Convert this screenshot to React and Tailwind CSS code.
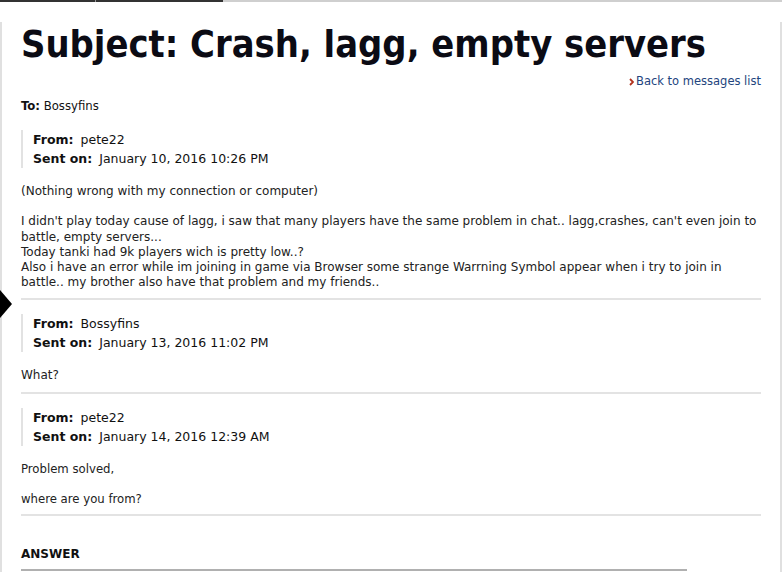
import React from 'react';

const messages = [
  {
    from: 'pete22',
    sent: 'January 10, 2016 10:26 PM',
    body: (
      <div className="font-['DejaVu_Sans',sans-serif] text-[12px] leading-[15.25px] text-[#222]">
        <p>(Nothing wrong with my connection or computer)</p>
        <p className="mt-[15px]">
          I didn't play today cause of lagg, i saw that many players have the same problem in chat.. lagg,crashes, can't even join to battle, empty servers...
          <br />
          Today tanki had 9k players wich is pretty low..?
          <br />
          Also i have an error while im joining in game via Browser some strange Warrning Symbol appear when i try to join in battle.. my brother also have that problem and my friends..
        </p>
      </div>
    ),
  },
  {
    from: 'Bossyfins',
    sent: 'January 13, 2016 11:02 PM',
    body: (
      <p className="font-['DejaVu_Sans',sans-serif] text-[12px] leading-[15px] text-[#222]">What?</p>
    ),
  },
  {
    from: 'pete22',
    sent: 'January 14, 2016 12:39 AM',
    body: (
      <div className="font-['DejaVu_Sans_Condensed','DejaVu_Sans',sans-serif] text-[13px] leading-[15px] text-[#222]">
        <p>Problem solved,</p>
        <p className="mt-[15px]">where are you from?</p>
      </div>
    ),
  },
];

function Meta({ from, sent }) {
  return (
    <div className="border-l-2 border-[#e2e2e2] pl-[10px] font-['DejaVu_Sans',sans-serif] text-[12.5px] leading-[19px] text-[#111]">
      <div>
        <span className="font-bold mr-[7px]">From:</span>
        {from}
      </div>
      <div>
        <span className="font-bold mr-[7px]">Sent on:</span>
        {sent}
      </div>
    </div>
  );
}

export default function App() {
  return (
    <div className="relative w-[782px] h-[572px] overflow-hidden bg-white">
      <div className="flex h-[2px]">
        <div className="w-[95px] bg-[#333]" />
        <div className="w-[1px] bg-[#999]" />
        <div className="w-[127px] bg-[#333]" />
        <div className="flex-1 bg-[#cfcfcf]" />
      </div>

      <div className="h-[570px] border-l-2 border-r-2 border-[#e0e0e0] pl-[19px] pr-[19px]">
        <h1 className="mt-[20px] font-['DejaVu_Sans_Condensed','DejaVu_Sans',sans-serif] font-bold text-[37.7px] leading-[44px] text-[#0b0b14]">
          Subject: Crash, lagg, empty servers
        </h1>

        <div className="mt-[8px] flex justify-end items-center gap-[2px] font-['DejaVu_Sans',sans-serif] text-[11.5px] leading-[14px] text-[#23457e]">
          <svg width="5" height="8" viewBox="0 0 5 8" className="mt-[1px]">
            <path d="M1 1 L4 4 L1 7" fill="none" stroke="#b3321c" strokeWidth="1.8" />
          </svg>
          <span>Back to messages list</span>
        </div>

        <div className="mt-[10px] font-['DejaVu_Sans_Condensed','DejaVu_Sans',sans-serif] text-[13px] leading-[15px] text-[#111]">
          <span className="font-bold">To:</span> Bossyfins
        </div>

        <div className="mt-[17px]">
          <Meta from={messages[0].from} sent={messages[0].sent} />
          <div className="mt-[16px]">{messages[0].body}</div>
          <div className="mt-[7px] h-[2px] bg-[#e3e3e3]" />
        </div>

        <div className="mt-[14px]">
          <Meta from={messages[1].from} sent={messages[1].sent} />
          <div className="mt-[16px]">{messages[1].body}</div>
          <div className="mt-[9px] h-[2px] bg-[#e3e3e3]" />
        </div>

        <div className="mt-[14px]">
          <Meta from={messages[2].from} sent={messages[2].sent} />
          <div className="mt-[15px]">{messages[2].body}</div>
          <div className="mt-[8px] h-[2px] bg-[#e3e3e3]" />
        </div>

        <div className="mt-[31px] font-['DejaVu_Sans',sans-serif] font-bold text-[12px] leading-[15px] text-[#111]">
          ANSWER
        </div>
        <div className="mt-[7px] w-[666px] h-[2px] bg-[#b0b0b0]" />
      </div>

      <svg className="absolute left-0 top-[288px]" width="13" height="32" viewBox="0 0 13 32">
        <path d="M0 2 L12 16 L0 30 Z" fill="#000" />
      </svg>
    </div>
  );
}
